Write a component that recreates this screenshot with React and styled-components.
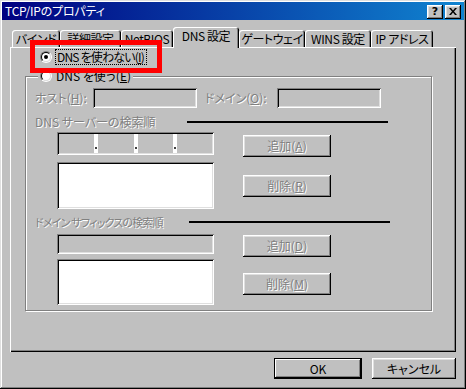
import React from "react";
import styled, { createGlobalStyle, css } from "styled-components";

const GlobalStyle = createGlobalStyle`
  html, body {
    margin: 0;
    padding: 0;
    background: #c0c0c0;
  }
  * {
    box-sizing: border-box;
  }
`;

const FONT = `"Noto Sans CJK JP", "Noto Sans", sans-serif`;

const disabledText = css`
  color: #808080;
  text-shadow: 1px 1px 0 #ffffff;
`;

const raised = css`
  box-shadow: inset -1px -1px #000000, inset 1px 1px #ffffff,
    inset -2px -2px #808080, inset 2px 2px #dfdfdf;
`;

const sunken = css`
  box-shadow: inset 1px 1px #808080, inset -1px -1px #ffffff,
    inset 2px 2px #000000, inset -2px -2px #dfdfdf;
`;

const App = () => {
  return (
    <>
      <GlobalStyle />
      <Window>
        <TitleBar>
          <TitleText>TCP/IPのプロパティ</TitleText>
          <TitleButtons>
            <TitleButton>
              <Help>?</Help>
            </TitleButton>
            <TitleButton>
              <svg width="8" height="7" viewBox="0 0 8 7">
                <path
                  d="M0 0h2l2 2.5L6 0h2L5 3.5 8 7H6L4 4.5 2 7H0l3-3.5z"
                  fill="#000"
                />
              </svg>
            </TitleButton>
          </TitleButtons>
        </TitleBar>

        <Body>
          <TabStrip>
            <Tab $w={48}>バインド</Tab>
            <Tab $w={61}>詳細設定</Tab>
            <Tab $w={52}>NetBIOS</Tab>
            <Tab $w={66} $active>
              DNS 設定
            </Tab>
            <Tab $w={66}>ゲートウェイ</Tab>
            <Tab $w={66}>WINS 設定</Tab>
            <Tab $w={62}>IP アドレス</Tab>
          </TabStrip>

          <Panel>
            <Highlight />
            <RadioRow>
              <Radio $checked />
              <FocusLabel>
                DNS を使わない(<u>I</u>)
              </FocusLabel>
            </RadioRow>

            <GroupBox>
              <Legend>
                <Radio />
                <Label>
                  DNS を使う(<u>E</u>)
                </Label>
              </Legend>

              <HostRow>
                <Label $disabled $w={58}>
                  ホスト(<u>H</u>):
                </Label>
                <Edit $w={104} $h={20} />
                <Label $disabled $w={72} $gap={8}>
                  ドメイン(<u>O</u>):
                </Label>
                <Edit $w={104} $h={20} />
              </HostRow>

              <Heading $top={8}>
                <Label $disabled $w={152}>
                  DNS サーバーの検索順
                </Label>
                <Rule />
              </Heading>

              <Section $top={4}>
                <Column>
                  <IpEdit>
                    <IpField />
                    <IpDot />
                    <IpField />
                    <IpDot />
                    <IpField />
                    <IpDot />
                    <IpField />
                  </IpEdit>
                  <ListBox $top={7} $h={47} />
                </Column>
                <Column>
                  <Button $top={3}>
                    追加(<u>A</u>)
                  </Button>
                  <Button $top={18}>
                    削除(<u>R</u>)
                  </Button>
                </Column>
              </Section>

              <Heading $top={7}>
                <Label $disabled $w={154} $tight>
                  ドメイン サフィックスの検索順
                </Label>
                <Rule />
              </Heading>

              <Section $top={6}>
                <Column>
                  <Edit $w={157} $h={20} />
                  <ListBox $top={5} $h={46} />
                </Column>
                <Column>
                  <Button $top={1}>
                    追加(<u>D</u>)
                  </Button>
                  <Button $top={16}>
                    削除(<u>M</u>)
                  </Button>
                </Column>
              </Section>
            </GroupBox>
          </Panel>

          <Footer>
            <DialogButton $default $w={88}>
              OK
            </DialogButton>
            <DialogButton $w={84}>キャンセル</DialogButton>
          </Footer>
        </Body>
      </Window>
    </>
  );
};

export default App;

const Window = styled.div`
  width: 466px;
  height: 389px;
  padding: 2px;
  background: #c0c0c0;
  font-family: ${FONT};
  font-size: 12px;
  line-height: 14px;
  font-feature-settings: "palt" on;
  color: #000000;
  box-shadow: inset -1px -1px #000000, inset 1px 1px #dfdfdf,
    inset -2px -2px #808080, inset 2px 2px #ffffff;
  display: flex;
  flex-direction: column;
`;

const TitleBar = styled.div`
  height: 18px;
  display: flex;
  align-items: center;
  justify-content: space-between;
  padding: 0 3px 0 3px;
  background: linear-gradient(90deg, #000080 0%, #1084d0 100%);
`;

const TitleText = styled.div`
  color: #ffffff;
  font-size: 12px;
  letter-spacing: -0.2px;
`;

const TitleButtons = styled.div`
  display: flex;
  gap: 2px;
  margin-top: 2px;
`;

const TitleButton = styled.div`
  width: 16px;
  height: 14px;
  background: #c0c0c0;
  ${raised};
  display: flex;
  align-items: center;
  justify-content: center;
  padding-bottom: 1px;
`;

const Help = styled.span`
  font-family: "DejaVu Sans", sans-serif;
  font-weight: 700;
  font-size: 11px;
  line-height: 11px;
`;

const Body = styled.div`
  padding: 8px 8px 0 8px;
  display: flex;
  flex-direction: column;
`;

const TabStrip = styled.div`
  height: 19px;
  display: flex;
  align-items: flex-end;
  padding-left: 2px;
`;

const Tab = styled.div`
  width: ${(p) => p.$w}px;
  height: ${(p) => (p.$active ? 21 : 17)}px;
  margin-bottom: ${(p) => (p.$active ? -1 : 0)}px;
  position: relative;
  z-index: ${(p) => (p.$active ? 2 : 0)};
  background: #c0c0c0;
  border-radius: 3px 3px 0 0;
  box-shadow: inset 1px 1px #ffffff, inset -1px 0 #000000,
    inset -2px 0 #808080;
  display: flex;
  justify-content: center;
  padding-top: 2px;
  white-space: nowrap;
  letter-spacing: -0.4px;
`;

const Panel = styled.div`
  position: relative;
  height: 305px;
  background: #c0c0c0;
  box-shadow: inset 1px 1px #ffffff, inset -1px -1px #000000,
    inset -2px -2px #808080;
  display: flex;
  flex-direction: column;
  align-items: flex-start;
`;

const Highlight = styled.div`
  position: absolute;
  left: 20px;
  top: -7px;
  width: 132px;
  height: 33px;
  border: 5px solid #ff0000;
  z-index: 3;
  pointer-events: none;
`;

const RadioRow = styled.div`
  margin: 3px 0 0 30px;
  height: 14px;
  display: flex;
  align-items: center;
  gap: 4px;
`;

const RadioOuter = styled.span`
  width: 12px;
  height: 12px;
  flex: none;
  border-radius: 50%;
  border: 1px solid;
  border-color: #808080 #ffffff #ffffff #808080;
  display: flex;
`;

const RadioInner = styled.span`
  flex: 1;
  border-radius: 50%;
  border: 1px solid;
  border-color: #000000 #dfdfdf #dfdfdf #000000;
  background: #ffffff;
  display: flex;
  align-items: center;
  justify-content: center;
`;

const RadioDot = styled.span`
  width: 4px;
  height: 4px;
  border-radius: 50%;
  background: #000000;
`;

const Radio = ({ $checked }) => (
  <RadioOuter>
    <RadioInner>{$checked && <RadioDot />}</RadioInner>
  </RadioOuter>
);

const Label = styled.span`
  white-space: nowrap;
  flex: none;
  ${(p) => p.$w && `width: ${p.$w}px;`}
  ${(p) => p.$gap && `margin-left: ${p.$gap}px;`}
  ${(p) =>
    p.$tight &&
    css`
      font-size: 11px;
      letter-spacing: -0.8px;
    `}
  ${(p) => p.$disabled && disabledText}
`;

const FocusLabel = styled.span`
  white-space: nowrap;
  letter-spacing: -0.8px;
  outline: 1px dotted #000000;
  outline-offset: 0;
  padding: 0 2px 0 1px;
`;

const GroupBox = styled.div`
  position: relative;
  margin: 12px 0 0 15px;
  width: 407px;
  height: 235px;
  border: 1px solid #808080;
  box-shadow: inset 1px 1px #ffffff, 1px 1px #ffffff;
  padding: 11px 0 0 9px;
  display: flex;
  flex-direction: column;
`;

const Legend = styled.div`
  position: absolute;
  left: 12px;
  top: -8px;
  height: 14px;
  padding: 0 2px;
  background: #c0c0c0;
  display: flex;
  align-items: center;
  gap: 4px;
`;

const HostRow = styled.div`
  height: 20px;
  display: flex;
  align-items: center;
`;

const Edit = styled.div`
  width: ${(p) => p.$w}px;
  height: ${(p) => p.$h}px;
  flex: none;
  background: #c0c0c0;
  ${sunken};
`;

const Heading = styled.div`
  margin-top: ${(p) => p.$top}px;
  height: 12px;
  display: flex;
  align-items: center;
`;

const Rule = styled.div`
  width: 201px;
  height: 2px;
  background: #000000;
`;

const Section = styled.div`
  margin: ${(p) => p.$top}px 0 0 22px;
  display: grid;
  grid-template-columns: 157px 88px;
  column-gap: 29px;
`;

const Column = styled.div`
  display: flex;
  flex-direction: column;
`;

const IpEdit = styled.div`
  height: 23px;
  background: #ffffff;
  ${sunken};
  padding: 2px;
  display: flex;
`;

const IpField = styled.div`
  flex: 1;
  background: #c0c0c0;
`;

const IpDot = styled.div`
  width: 4px;
  position: relative;
  &::after {
    content: "";
    position: absolute;
    left: 1px;
    bottom: 4px;
    width: 2px;
    height: 2px;
    background: #404040;
  }
`;

const ListBox = styled.div`
  margin-top: ${(p) => p.$top}px;
  height: ${(p) => p.$h}px;
  background: #ffffff;
  ${sunken};
`;

const Button = styled.div`
  margin-top: ${(p) => p.$top}px;
  width: 88px;
  height: 22px;
  background: #c0c0c0;
  ${raised};
  display: flex;
  align-items: center;
  justify-content: center;
  white-space: nowrap;
  ${disabledText};
`;

const Footer = styled.div`
  margin-top: 6px;
  display: flex;
  justify-content: flex-end;
  gap: 10px;
`;

const DialogButton = styled.div`
  width: ${(p) => p.$w}px;
  height: 21px;
  background: #c0c0c0;
  display: flex;
  align-items: center;
  justify-content: center;
  ${(p) =>
    p.$default
      ? css`
          box-shadow: inset 0 0 0 1px #000000, inset -2px -2px #000000,
            inset 2px 2px #ffffff, inset -3px -3px #808080;
        `
      : raised};
`;
